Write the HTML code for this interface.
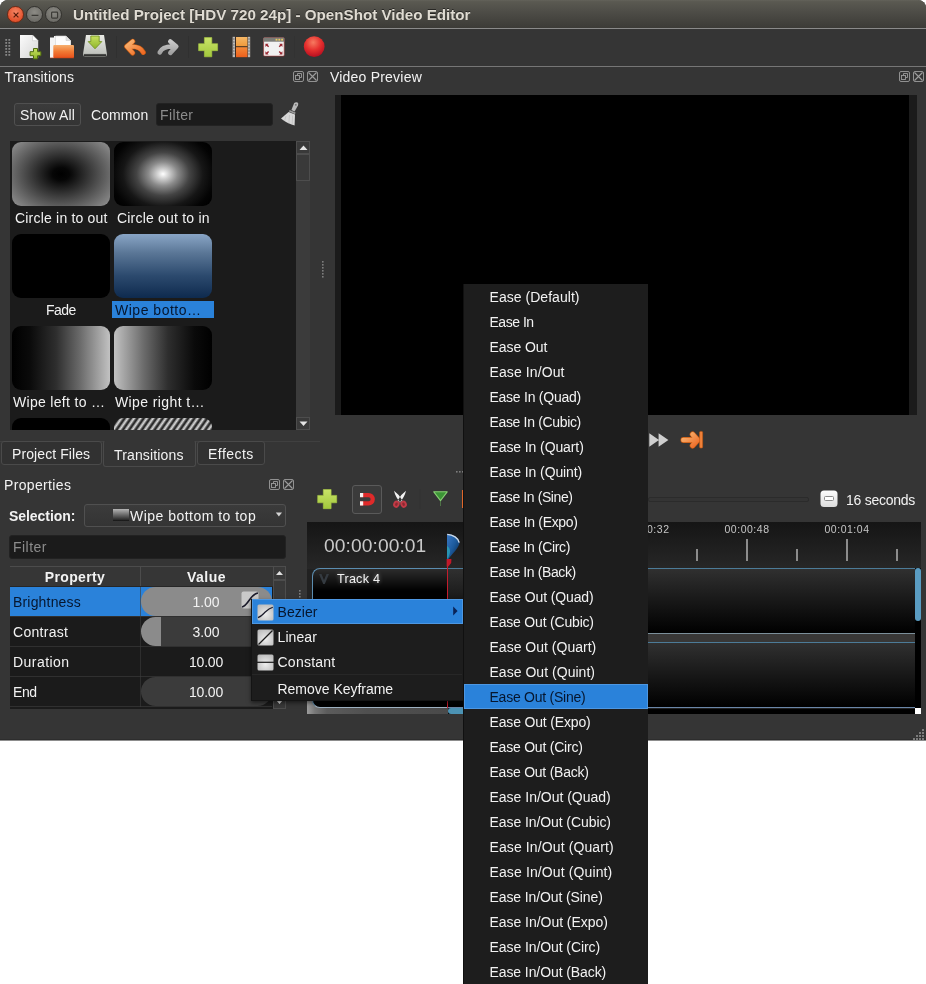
<!DOCTYPE html>
<html lang="en">
<head>
<meta charset="utf-8">
<title>Untitled Project [HDV 720 24p] - OpenShot Video Editor</title>
<style>
*{box-sizing:border-box;margin:0;padding:0}
html,body{width:926px;height:984px;background:#fff;overflow:hidden}
body{will-change:transform}
body{font-family:"Liberation Sans",sans-serif;font-size:14px;color:#f2f2f2;position:relative;line-height:20px}
.a{position:absolute}
.t{position:absolute;white-space:nowrap;line-height:20px;height:20px}
.b{font-weight:700}
#win{left:0;top:0;width:926px;height:741px;border-bottom:1px solid #8d8d8d;box-shadow:inset 0 -1px 0 #2d2d2d;background:#353535;border-radius:8px 8px 0 0;overflow:hidden}
#titlebar{left:0;top:0;width:926px;height:28px;background:linear-gradient(#63625a 0,#5a5951 6%,#504f49 35%,#45443f 70%,#3c3b37 100%)}
#titlebar .ttl{top:5px;font-size:15.2px;font-weight:700;color:#dfdbd2;text-shadow:0 -1px 0 rgba(0,0,0,.5)}
.wb{border-radius:50%;width:16.8px;height:16.8px;top:6.2px}
#toolbar{left:0;top:28px;width:926px;height:39px;border-top:1px solid #8a8a8a;border-bottom:1px solid #767676}
.base{background:#1b1b1b}
.inp{background:#1b1b1b;border-radius:3px;border:1px solid #222}
.ph{color:#8c8c8c}
.btn{border:1px solid #505050;border-radius:3px;background:linear-gradient(#3b3b3b,#343434)}
.thumb{width:98px;height:64px;border-radius:9px}
.sel{background:#2a82da;color:#06162e}
.sb{background:#3b3b3b}
.sbb{background:#393939;border:1px solid #4d4d4d}
.menu{background:#1d1d1d;box-shadow:inset 1px 0 0 #101010}
.mi{position:absolute;left:1px;right:0;height:25px}
.mi.sel{box-shadow:inset 0 0 0 1px #4d97e2}
.rl{top:-1px;font-size:10.5px;color:#c6c6c6;width:100px;text-align:center;line-height:16px;height:16px}
.tk{width:2px;background:#8c8c8c}
.mi span{position:absolute;top:3px;margin-left:-1px;line-height:20px;white-space:nowrap}
</style>
</head>
<body>
<div id="win" class="a">
  <!-- title bar -->
  <div id="titlebar" class="a">
    <div class="a wb" style="left:7.1px;background:radial-gradient(circle at 50% 35%,#f58564,#e3522d 70%,#b8431f);border:1px solid #6e2a15"></div>
    <div class="a wb" style="left:26.1px;background:radial-gradient(circle at 50% 35%,#8c8b85,#6f6e69 70%,#5a5955);border:1px solid #33322f"></div>
    <div class="a wb" style="left:45.1px;background:radial-gradient(circle at 50% 35%,#8c8b85,#6f6e69 70%,#5a5955);border:1px solid #33322f"></div>
    <svg class="a" style="left:7.5px;top:6.6px" width="56" height="16" viewBox="0 0 56 16" fill="none" stroke="#3b3a36" stroke-width="1.2"><path d="M5.6 5.6 L10.4 10.4 M10.4 5.6 L5.6 10.4" stroke="#5a1d0c"/><path d="M23.6 8.3 H30.4"/><rect x="43.6" y="5.1" width="6" height="6" rx=".8"/></svg>
    <div class="t ttl" style="letter-spacing:-0.01px;left:73px">Untitled Project [HDV 720 24p] - OpenShot Video Editor</div>
  </div>
  <div id="toolbar" class="a"></div>
  <svg class="a" style="left:0;top:29px" width="340" height="37" viewBox="0 29 340 37">
    <defs>
      <linearGradient id="gpg" x1="0" y1="0" x2="1" y2="1"><stop offset="0" stop-color="#fbfbfb"/><stop offset="1" stop-color="#d6d6d6"/></linearGradient>
      <linearGradient id="ggp" x1="0" y1="0" x2="0" y2="1"><stop offset="0" stop-color="#c9e368"/><stop offset="1" stop-color="#a2c83c"/></linearGradient>
      <linearGradient id="ggr" x1="0" y1="0" x2="0" y2="1"><stop offset="0" stop-color="#c6e05e"/><stop offset="1" stop-color="#8fb52a"/></linearGradient>
      <linearGradient id="gor" x1="0" y1="0" x2="0" y2="1"><stop offset="0" stop-color="#f6b070"/><stop offset=".5" stop-color="#f27a34"/><stop offset="1" stop-color="#e9501a"/></linearGradient>
      <linearGradient id="gdr" x1="0" y1="0" x2="0" y2="1"><stop offset="0" stop-color="#e9ebe6"/><stop offset=".8" stop-color="#c3c5c0"/><stop offset="1" stop-color="#8b8d88"/></linearGradient>
      <linearGradient id="gun" x1="0" y1="0" x2="1" y2="1"><stop offset="0" stop-color="#f9b774"/><stop offset="1" stop-color="#ef6a24"/></linearGradient>
      <linearGradient id="gre" x1="0" y1="0" x2="0" y2="1"><stop offset="0" stop-color="#c8c8c8"/><stop offset="1" stop-color="#a2a2a2"/></linearGradient>
      <radialGradient id="grec" cx=".45" cy=".3" r=".75"><stop offset="0" stop-color="#f77a60"/><stop offset=".5" stop-color="#e6302e"/><stop offset="1" stop-color="#b00a1e"/></radialGradient>
      <linearGradient id="gf1" x1="0" y1="0" x2="0" y2="1"><stop offset="0" stop-color="#f5b766"/><stop offset="1" stop-color="#ef9a3c"/></linearGradient>
      <linearGradient id="gf2" x1="0" y1="0" x2="0" y2="1"><stop offset="0" stop-color="#f48a38"/><stop offset="1" stop-color="#ec5f1c"/></linearGradient>
    </defs>
    <!-- handle -->
    <g fill="#868686"><rect x="5.3" y="39" width="1.8" height="1.8"/><rect x="8.4" y="39" width="1.8" height="1.8"/><rect x="5.3" y="42" width="1.8" height="1.8"/><rect x="8.4" y="42" width="1.8" height="1.8"/><rect x="5.3" y="45" width="1.8" height="1.8"/><rect x="8.4" y="45" width="1.8" height="1.8"/><rect x="5.3" y="48" width="1.8" height="1.8"/><rect x="8.4" y="48" width="1.8" height="1.8"/><rect x="5.3" y="51" width="1.8" height="1.8"/><rect x="8.4" y="51" width="1.8" height="1.8"/><rect x="5.3" y="54" width="1.8" height="1.8"/><rect x="8.4" y="54" width="1.8" height="1.8"/></g>
    <!-- new -->
    <path d="M20 35 H32.5 L38.2 40.7 V58 H20Z" fill="url(#gpg)"/>
    <path d="M32.5 35 L38.2 40.7 H32.5Z" fill="#fff" stroke="#c0c0c0" stroke-width=".5"/>
    <path d="M33.5 48.5 h4 v3.2 h3.4 v4 h-3.4 v3.2 h-4 v-3.2 h-3.4 v-4 h3.4Z" fill="url(#ggr)" stroke="#4f6b10" stroke-width="1" stroke-linejoin="round"/>
    <!-- open -->
    <path d="M50 37.5 H54 V36 H66 L71 41 V58 H50Z" fill="#f4f4f4"/>
    <path d="M55.5 36 H66 L70.5 40.5 V46 H55.5Z" fill="#fdfdfd" stroke="#d2d2d2" stroke-width=".6"/><path d="M66 36 V40.5 H70.5Z" fill="#e2e2e2" stroke="#c4c4c4" stroke-width=".5"/>
    <rect x="53.3" y="45" width="20.7" height="13" rx="1" fill="url(#gor)"/>
    <rect x="50" y="57.4" width="24" height="1" fill="#c8451a" opacity=".6"/>
    <!-- save -->
    <path d="M86 35 H104 L107 54 Q107 57 104.5 57 H85.5 Q83 57 83 54Z" fill="url(#gdr)"/>
    <rect x="84" y="54.2" width="22" height="2.2" fill="#1e1e1e" opacity=".85"/>
    <path d="M90.8 36 h8.4 v5.6 h2.6 l-6.8 7.2 l-6.8 -7.2 h2.6Z" fill="url(#ggr)" stroke="#6c8c1c" stroke-width=".8" stroke-linejoin="round"/>
    <!-- separators -->
    <rect x="116" y="36" width="1" height="22" fill="#2a2a2a" opacity=".4"/>
    <rect x="188" y="36" width="1" height="22" fill="#2a2a2a" opacity=".4"/>
    <rect x="294" y="36" width="1" height="22" fill="#2a2a2a" opacity=".3"/>
    <!-- undo -->
    <g transform="translate(135 47.2) scale(.92) translate(-135 -46.8)">
    <path d="M132.5 40.5 L126 46 L132.5 53 M126.5 46.3 C134 45.5 141 46 144 52.5" fill="none" stroke="#c45a12" stroke-width="5.6" stroke-linecap="round" stroke-linejoin="round"/>
    <path d="M132.5 40.5 L126 46 L132.5 53 M126.5 46.3 C134 45.5 141 46 144 52.5" fill="none" stroke="url(#gun)" stroke-width="4.2" stroke-linecap="round" stroke-linejoin="round"/>
    </g>
    <!-- redo -->
    <g transform="translate(168 47.2) scale(.92) translate(-168 -46.8)">
    <path d="M170.5 40.5 L177 46 L170.5 53 M176.5 46.3 C169 45.5 162 46 159 52.5" fill="none" stroke="url(#gre)" stroke-width="5" stroke-linecap="round" stroke-linejoin="round"/>
    </g>
    <!-- plus -->
    <path d="M204.4 37.6 h7.4 v6.1 h5.8 v7 h-5.8 v6.1 h-7.4 v-6.1 h-5.8 v-7 h5.8Z" fill="url(#ggp)" stroke="#a9cb42" stroke-width=".6" stroke-linejoin="round"/>
    <!-- film -->
    <rect x="232.6" y="36.8" width="17.6" height="20.4" fill="#3a2a20"/>
    <rect x="232.6" y="36.8" width="2.4" height="20.4" fill="#b9b9b9"/>
    <rect x="247.8" y="36.8" width="2.4" height="20.4" fill="#b9b9b9"/>
    <g fill="#6a6a6a"><rect x="233" y="38.5" width="1.6" height="1"/><rect x="233" y="41.5" width="1.6" height="1"/><rect x="233" y="44.5" width="1.6" height="1"/><rect x="233" y="47.5" width="1.6" height="1"/><rect x="233" y="50.5" width="1.6" height="1"/><rect x="233" y="53.5" width="1.6" height="1"/><rect x="248.2" y="38.5" width="1.6" height="1"/><rect x="248.2" y="41.5" width="1.6" height="1"/><rect x="248.2" y="44.5" width="1.6" height="1"/><rect x="248.2" y="47.5" width="1.6" height="1"/><rect x="248.2" y="50.5" width="1.6" height="1"/><rect x="248.2" y="53.5" width="1.6" height="1"/></g>
    <rect x="236" y="37" width="11.4" height="9.2" fill="url(#gf1)"/>
    <rect x="236" y="47.2" width="11.4" height="10" fill="url(#gf2)"/>
    <!-- fullscreen -->
    <rect x="263.6" y="37.7" width="20.6" height="18.4" rx="1" fill="#f1f1f1" stroke="#a83a3a" stroke-width=".6"/>
    <rect x="263.6" y="37.7" width="20.6" height="4" fill="#7c7d78"/>
    <g fill="#e8c860"><rect x="275.6" y="38.8" width="1.8" height="1.8"/><rect x="278.4" y="38.8" width="1.8" height="1.8"/><rect x="281.2" y="38.8" width="1.8" height="1.8"/></g>
    <g fill="#9a2630"><path d="M265.4 43.8 h3.2 l-1 1 l1.5 1.5 l-1 1 l-1.5 -1.5 l-1.2 1.2Z"/><path d="M282.4 43.8 h-3.2 l1 1 l-1.5 1.5 l1 1 l1.5 -1.5 l1.2 1.2Z"/><path d="M265.4 54.4 h3.2 l-1 -1 l1.5 -1.5 l-1 -1 l-1.5 1.5 l-1.2 -1.2Z"/><path d="M282.4 54.4 h-3.2 l1 -1 l-1.5 -1.5 l1 -1 l1.5 1.5 l1.2 -1.2Z"/></g>
    <!-- record -->
    <circle cx="314.2" cy="46.6" r="10.4" fill="url(#grec)"/>
  </svg>

  <!-- Transitions dock -->
  <div class="t" style="letter-spacing:0.16px;left:4.5px;top:67px">Transitions</div>
  <div class="a btn" style="left:14px;top:103px;width:67px;height:23px"></div>
  <div class="t" style="letter-spacing:0.17px;left:20px;top:105px">Show All</div>
  <div class="t" style="letter-spacing:0.10px;left:91px;top:105px">Common</div>
  <div class="a inp" style="left:156px;top:102.5px;width:117px;height:23.7px"></div>
  <div class="t ph" style="letter-spacing:0.38px;left:160px;top:105px">Filter</div>

  <div class="a base" style="left:10px;top:141px;width:300px;height:289px;overflow:hidden" id="list"><div class="a" style="left:0;top:-1px;width:300px;height:290px">
    <div class="a thumb" style="left:2px;top:2px;background:radial-gradient(ellipse 62% 70% at 50% 50%,#000 0,#060606 14%,#4c4c4c 60%,#888 100%,#adadad 112%)"></div>
    <div class="a thumb" style="left:104px;top:2px;background:radial-gradient(ellipse 60% 75% at 50% 50%,#fff 0,#d0d0d0 10%,#8a8a8a 25%,#444 45%,#161616 68%,#040404 88%,#000 100%)"></div>
    <div class="t" style="letter-spacing:0.20px;left:5px;top:68px">Circle in to out</div>
    <div class="t" style="letter-spacing:0.20px;left:107px;top:68px">Circle out to in</div>

    <div class="a thumb" style="left:2px;top:94px;background:#000"></div>
    <div class="a thumb" style="left:104px;top:94px;background:linear-gradient(#89a5c6 0,#5a7696 30%,#2c4a6e 65%,#0e2a4e 100%)"></div>
    <div class="t" style="letter-spacing:-0.51px;left:36px;top:160px">Fade</div>
    <div class="a sel" style="left:102px;top:161px;width:102px;height:17px"></div>
    <div class="t" style="letter-spacing:0.51px;left:105px;top:160px;color:#06162e">Wipe botto…</div>

    <div class="a thumb" style="left:2px;top:186px;background:linear-gradient(90deg,#000 0,#0a0a0a 18%,#2e2e2e 45%,#6c6c6c 70%,#c2c2c2 100%)"></div>
    <div class="a thumb" style="left:104px;top:186px;background:linear-gradient(90deg,#c2c2c2 0,#6c6c6c 30%,#2e2e2e 55%,#0a0a0a 82%,#000 100%)"></div>
    <div class="t" style="letter-spacing:0.31px;left:3px;top:252px">Wipe left to …</div>
    <div class="t" style="letter-spacing:0.39px;left:105px;top:252px">Wipe right t…</div>

    <div class="a thumb" style="left:2px;top:278px;background:#000"></div>
    <div class="a thumb" style="left:104px;top:278px;background:repeating-linear-gradient(125deg,#9a9a9a 0,#d8d8d8 1.2px,#5a5a5a 2.6px,#2a2a2a 3.4px,#2a2a2a 4.2px,#9a9a9a 5.2px)"></div>

    <div class="a sb" style="left:286px;top:0;width:14px;height:290px"></div>
    <div class="a sbb" style="left:286px;top:1px;width:14px;height:13px"></div>
    <div class="a sbb" style="left:286px;top:14px;width:14px;height:27px"></div>
    <div class="a sbb" style="left:286px;top:277px;width:14px;height:13px"></div>
  </div></div>

  <!-- tabs -->
  <div class="a" style="left:0;top:441px;width:320px;height:1px;background:#404040"></div>
  <div class="a btn" style="left:1px;top:441px;width:101px;height:24px;background:#313131;border-color:#4a4a4a"></div>
  <div class="a btn" style="left:103px;top:440px;width:93px;height:27px;background:#353535;border-color:#4a4a4a;border-top-color:#353535"></div>
  <div class="a btn" style="left:197px;top:441px;width:68px;height:24px;background:#313131;border-color:#4a4a4a"></div>
  <div class="t" style="letter-spacing:0.09px;left:12px;top:444px">Project Files</div>
  <div class="t" style="letter-spacing:0.15px;left:114px;top:445px">Transitions</div>
  <div class="t" style="letter-spacing:0.46px;left:208px;top:444px">Effects</div>

  <!-- Properties dock -->
  <div class="t" style="letter-spacing:0.35px;left:4px;top:475px">Properties</div>
  <div class="t b" style="letter-spacing:-0.05px;left:9px;top:506px">Selection:</div>
  <div class="a btn" style="left:84px;top:504px;width:202px;height:23px"></div>
  <div class="a" style="left:113px;top:509px;width:16px;height:12px;background:linear-gradient(#b5b5b5,#777 40%,#2a2a2a 90%,#111)"></div>
  <div class="t" style="letter-spacing:0.48px;left:130px;top:506px">Wipe bottom to top</div>
  <div class="a inp" style="left:9px;top:535px;width:277px;height:24px"></div>
  <div class="t ph" style="letter-spacing:0.47px;left:13px;top:537px">Filter</div>

  <div class="a base" style="left:10px;top:566px;width:276px;height:142.5px;overflow:hidden" id="tbl">
    <div class="a" style="left:0;top:0;width:263px;height:21px;background:#363636;border-top:1px solid #4c4c4c;border-bottom:1px solid #262626"></div>
    <div class="a" style="left:130px;top:1px;width:1px;height:19px;background:#4c4c4c"></div>
    <div class="t b" style="letter-spacing:0.37px;left:0;top:1px;width:130px;text-align:center">Property</div>
    <div class="t b" style="letter-spacing:0.45px;left:131px;top:1px;width:131px;text-align:center">Value</div>
    <!-- rows -->
    <div class="a sel" style="left:0;top:21px;width:262px;height:29px"></div>
    <div class="a" style="left:131px;top:21px;width:131px;height:29px;border-radius:15px;background:#8b8b8b"></div>
    <div class="a" style="left:131px;top:51px;width:131px;height:29px;border-radius:15px;background:linear-gradient(90deg,#8b8b8b 20px,#3b3b3b 20px)"></div>
    <div class="a" style="left:131px;top:111px;width:131px;height:29px;border-radius:15px;background:#3b3b3b"></div>
    <div class="a" style="left:0;top:50px;width:262px;height:1px;background:#303030"></div>
    <div class="a" style="left:0;top:80px;width:262px;height:1px;background:#303030"></div>
    <div class="a" style="left:0;top:110px;width:262px;height:1px;background:#303030"></div>
    <div class="a" style="left:0;top:140px;width:262px;height:1px;background:#303030"></div>
    <div class="a" style="left:130px;top:21px;width:1px;height:120px;background:rgba(60,60,60,.6)"></div>
    <div class="t" style="letter-spacing:0.18px;left:3px;top:26px;color:#06162e">Brightness</div>
    <div class="t" style="letter-spacing:0.28px;left:3px;top:56px">Contrast</div>
    <div class="t" style="letter-spacing:0.45px;left:3px;top:86px">Duration</div>
    <div class="t" style="letter-spacing:-0.41px;left:3px;top:116px">End</div>
    <div class="t" style="letter-spacing:-0.02px;left:131px;top:26px;width:130px;text-align:center">1.00</div>
    <div class="t" style="letter-spacing:-0.02px;left:131px;top:56px;width:130px;text-align:center">3.00</div>
    <div class="t" style="letter-spacing:-0.19px;left:131px;top:86px;width:130px;text-align:center">10.00</div>
    <div class="t" style="letter-spacing:-0.19px;left:131px;top:116px;width:130px;text-align:center">10.00</div>
    <svg class="a" style="left:231px;top:25px" width="18" height="18" viewBox="0 0 18 18"><rect x="0.5" y="0.5" width="17" height="17" rx="2" fill="#c9c9c9"/><path d="M1 16 C8 14 9 3 17 2" stroke="#1b1b2b" stroke-width="1.6" fill="none"/></svg>
    <!-- scrollbar -->
    <div class="a sb" style="left:263px;top:0;width:13px;height:143px"></div>
    <div class="a sbb" style="left:263px;top:0;width:13px;height:14px"></div>
    <div class="a sbb" style="left:263px;top:14px;width:13px;height:60px"></div>
    <div class="a sbb" style="left:263px;top:129px;width:13px;height:13.5px"></div>
    <svg class="a" style="left:263px;top:0" width="13" height="14"><path d="M3 9 L6.5 5 L10 9Z" fill="#e0e0e0"/></svg>
    <svg class="a" style="left:263px;top:129px" width="13" height="14"><path d="M3 5 L6.5 9 L10 5Z" fill="#e0e0e0"/></svg>
  </div>

  <!-- Video preview dock -->
  <div class="t" style="letter-spacing:0.21px;left:330px;top:67px">Video Preview</div>
  <div class="a" style="left:335px;top:95px;width:582px;height:320px;background:#1b1b1b"></div>
  <div class="a" style="left:341px;top:95px;width:568px;height:320px;background:#000"></div>

  <svg class="a" style="left:293px;top:71px" width="26" height="12" viewBox="0 0 26 12" fill="none" stroke="#9c9c9c" stroke-width=".9">
    <rect x="0.5" y="0.5" width="10" height="10" rx="1.5"/><rect x="2.5" y="4.5" width="4" height="4" stroke-width=".9"/><path d="M4.5 4.5 V2.5 H8.5 V6.5 H6.5" stroke-width=".9"/>
    <g transform="translate(14,0)"><rect x="0.5" y="0.5" width="10" height="10" rx="1.5"/><path d="M1.5 1.5 L9.5 9.5 M9.5 1.5 L1.5 9.5" stroke-width="1.1"/></g></svg>
  <svg class="a" style="left:899px;top:71px" width="26" height="12" viewBox="0 0 26 12" fill="none" stroke="#9c9c9c" stroke-width=".9">
    <rect x="0.5" y="0.5" width="10" height="10" rx="1.5"/><rect x="2.5" y="4.5" width="4" height="4" stroke-width=".9"/><path d="M4.5 4.5 V2.5 H8.5 V6.5 H6.5" stroke-width=".9"/>
    <g transform="translate(14,0)"><rect x="0.5" y="0.5" width="10" height="10" rx="1.5"/><path d="M1.5 1.5 L9.5 9.5 M9.5 1.5 L1.5 9.5" stroke-width="1.1"/></g></svg>
  <svg class="a" style="left:269px;top:479px" width="26" height="12" viewBox="0 0 26 12" fill="none" stroke="#9c9c9c" stroke-width=".9">
    <rect x="0.5" y="0.5" width="10" height="10" rx="1.5"/><rect x="2.5" y="4.5" width="4" height="4" stroke-width=".9"/><path d="M4.5 4.5 V2.5 H8.5 V6.5 H6.5" stroke-width=".9"/>
    <g transform="translate(14,0)"><rect x="0.5" y="0.5" width="10" height="10" rx="1.5"/><path d="M1.5 1.5 L9.5 9.5 M9.5 1.5 L1.5 9.5" stroke-width="1.1"/></g></svg>
  <svg class="a" style="left:280px;top:101px" width="20" height="26" viewBox="280 101 20 26">
    <path d="M294.2 103 Q296 101.6 297.6 102.6 Q298.8 103.6 298 105.4 L294.6 111.6 L291.4 110Z" fill="#b9b9b9"/>
    <circle cx="295.8" cy="104.8" r=".9" fill="#6e6e6e"/>
    <path d="M289.6 110 L295.6 112.6 L295 114.2 L289 111.6Z" fill="#9a9a9a"/>
    <path d="M288.6 112 L295 114.6 L294.6 125.4 Q287 123.6 281 118.6Z" fill="#d8d8d8"/>
    <path d="M286 116 L284.5 121 M289.5 115 L288.8 123.4 M292.6 115.6 L292.2 124.6" stroke="#bdbdbd" stroke-width=".7" fill="none"/>
  </svg>
  <svg class="a" style="left:297px;top:141px" width="13" height="13"><path d="M2.5 9 L6.5 4.5 L10.5 9Z" fill="#e4e4e4"/></svg>
  <svg class="a" style="left:297px;top:417px" width="13" height="13"><path d="M2.5 4.5 L6.5 9 L10.5 4.5Z" fill="#e4e4e4"/></svg>
  <svg class="a" style="left:275px;top:512px" width="8" height="6"><path d="M0.8 0.6 L7 0.6 L3.9 4.4Z" fill="#d4d4d4"/></svg>
  <svg class="a" style="left:645px;top:428px" width="62" height="24" viewBox="645 428 62 24">
    <defs><linearGradient id="gje" x1="0" y1="0" x2="1" y2="1"><stop offset="0" stop-color="#f9b774"/><stop offset="1" stop-color="#ee6a26"/></linearGradient></defs>
    <path d="M649.3 433.2 L659 440 L649.3 446.8Z M658.6 433.2 L668.4 440 L658.6 446.8Z" fill="#cfcfcf"/>
    <path d="M683.4 440 H696 M692.6 434.4 L697.6 440 L692.6 445.6" fill="none" stroke="#c9590f" stroke-width="5.8" stroke-linecap="round" stroke-linejoin="round"/>
    <path d="M683.4 440 H696 M692.6 434.4 L697.6 440 L692.6 445.6" fill="none" stroke="url(#gje)" stroke-width="4.6" stroke-linecap="round" stroke-linejoin="round"/>
    <rect x="699.6" y="431.4" width="3" height="16.6" rx="1" fill="#f0813a" stroke="#c9590f" stroke-width=".6"/>
  </svg>
  <div class="a" style="left:352px;top:485px;width:30px;height:29px;border:1px solid #5a5a5a;border-radius:3px;background:#3b3b3b"></div>
  <svg class="a" style="left:312px;top:484px" width="152" height="32" viewBox="312 484 152 32">
    <path d="M323.3 489.5 h7.8 v5.9 h5.6 v7.4 h-5.6 v5.9 h-7.8 v-5.9 h-5.6 v-7.4 h5.6Z" fill="url(#ggp)" stroke="#a9cb42" stroke-width=".6" stroke-linejoin="round"/>
    <path d="M360 495.1 H368.6 A4.1 4.1 0 0 1 368.6 503.4 H360" fill="none" stroke="#e02a2a" stroke-width="4.2"/>
    <rect x="360" y="493" width="3.2" height="4.2" fill="#f6f0f0"/><rect x="360" y="501.3" width="3.2" height="4.2" fill="#f6f0f0"/>
    <path d="M394 490.8 Q395.4 497 400.2 502.4 L402.4 500.4 Q398.6 494 394 490.8Z M406 490.8 Q404.6 497 399.8 502.4 L397.6 500.4 Q401.4 494 406 490.8Z" fill="#f3f3f3"/>
    <ellipse cx="396.4" cy="504.2" rx="2.2" ry="2.7" fill="#8a2a32" stroke="#c23a46" stroke-width="1.9" transform="rotate(25 396.4 504.2)"/>
    <ellipse cx="403.6" cy="504.2" rx="2.2" ry="2.7" fill="#8a2a32" stroke="#c23a46" stroke-width="1.9" transform="rotate(-25 403.6 504.2)"/>
    <rect x="419.5" y="489" width="1" height="20" fill="#2e2e2e" opacity=".6"/>
    <path d="M433.8 491.8 H447.2 L440.5 500.6Z" fill="#3c9436" stroke="#86cf72" stroke-width="1.1" stroke-linejoin="round"/>
    <rect x="440" y="501" width="1" height="5" fill="#6ab05a" opacity=".5"/>
    <rect x="462" y="490" width="1.2" height="18" fill="#e0672a"/>
  </svg>
  <svg class="a" style="left:820px;top:490px" width="18" height="18" viewBox="0 0 18 18"><defs><linearGradient id="gzb" x1="0" y1="0" x2="0" y2="1"><stop offset="0" stop-color="#fdfdfd"/><stop offset="1" stop-color="#dcdcdc"/></linearGradient></defs><rect x=".5" y=".5" width="17" height="16.5" rx="3.5" fill="url(#gzb)"/><rect x="4.5" y="6.5" width="9" height="4" rx="1" fill="#fff" stroke="#8a8a8a" stroke-width="1"/></svg>
  <svg class="a" style="left:321px;top:258px" width="4" height="24"><g fill="#7d7d7d"><rect x="1" y="3" width="1.6" height="1.6"/><rect x="1" y="6" width="1.6" height="1.6"/><rect x="1" y="9" width="1.6" height="1.6"/><rect x="1" y="12" width="1.6" height="1.6"/><rect x="1" y="15" width="1.6" height="1.6"/><rect x="1" y="18" width="1.6" height="1.6"/></g></svg>
  <svg class="a" style="left:298px;top:588px" width="4" height="16"><g fill="#7d7d7d"><rect x="1" y="2" width="1.6" height="1.6"/><rect x="1" y="5" width="1.6" height="1.6"/><rect x="1" y="8" width="1.6" height="1.6"/><rect x="1" y="11" width="1.6" height="1.6"/></g></svg>
  <svg class="a" style="left:455px;top:470px" width="10" height="4"><g fill="#7d7d7d"><rect x="1" y="1" width="1.6" height="1.6"/><rect x="4" y="1" width="1.6" height="1.6"/><rect x="7" y="1" width="1.6" height="1.6"/></g></svg>
  <svg class="a" style="left:912px;top:727px" width="14" height="14"><g fill="#7b7b7b"><rect x="10" y="2" width="2" height="2"/><rect x="7" y="5" width="2" height="2"/><rect x="10" y="5" width="2" height="2"/><rect x="4" y="8" width="2" height="2"/><rect x="7" y="8" width="2" height="2"/><rect x="10" y="8" width="2" height="2"/><rect x="1" y="11" width="2" height="2"/><rect x="4" y="11" width="2" height="2"/><rect x="7" y="11" width="2" height="2"/><rect x="10" y="11" width="2" height="2"/></g></svg>
  <!-- timeline -->
  <div class="a" style="left:648px;top:497px;width:161px;height:5px;border:1px solid #2b2b2b;border-radius:2px;background:#343434"></div>
  <div class="t" style="letter-spacing:-0.25px;left:846px;top:490px">16 seconds</div>
  <div class="a" id="tl" style="left:307px;top:522px;width:614px;height:192px;background:#212121;overflow:hidden">
    <div class="a" style="left:0;top:0;width:614px;height:47px;background:linear-gradient(#151515,#272727)"></div>
    <div class="t" style="letter-spacing:0.09px;left:17px;top:13px;font-size:19.2px;color:#c9c9c9;line-height:22px;height:22px">00:00:00:01</div>
    <div class="t rl" style="letter-spacing:0.52px;left:290px;">00:00:32</div>
    <div class="t rl" style="letter-spacing:0.52px;left:390px;">00:00:48</div>
    <div class="t rl" style="letter-spacing:0.52px;left:490px;">00:01:04</div>
    <div class="a tk" style="left:389px;top:27px;height:12px"></div>
    <div class="a tk" style="left:439px;top:17px;height:22px"></div>
    <div class="a tk" style="left:489px;top:27px;height:12px"></div>
    <div class="a tk" style="left:539px;top:17px;height:22px"></div>
    <div class="a tk" style="left:589px;top:27px;height:12px"></div>
    <!-- lanes -->
    <div class="a" style="left:141px;top:46px;width:467px;height:66px;background:linear-gradient(#303030 0,#1a1a1a 45%,#000 100%);border-top:1px solid #4c7b98;border-bottom:1px solid #7b8f9a"></div>
    <div class="a" style="left:141px;top:112px;width:467px;height:8px;background:#383736"></div>
    <div class="a" style="left:141px;top:120px;width:467px;height:66px;background:linear-gradient(#303030 0,#1a1a1a 45%,#000 100%);border-top:1px solid #4c7b98;border-bottom:1px solid #6a86a8"></div>
    <div class="a" style="left:0;top:178px;width:141px;height:14px;background:linear-gradient(90deg,#9c9c9c 0,#777 8px,#5c5c5c 20px,#505050 60px,#4a4a4a)"></div>
    <!-- track name boxes -->
    <div class="a" style="left:5px;top:46px;width:136px;height:68px;background:linear-gradient(#2c2c2c 0,#000 22px);border:1px solid #5b8db0;border-right:0;border-radius:8px 0 0 8px"></div>
    <div class="a" style="left:5px;top:120px;width:136px;height:66px;background:linear-gradient(#2c2c2c 0,#000 22px);border:1px solid #5b8db0;border-bottom-color:#9fb2c2;border-right:0;border-radius:8px 0 0 8px"></div>
    
    
    <div class="a" style="left:141px;top:187px;width:473px;height:5px;background:#000"></div>
    <div class="a" style="left:141px;top:186px;width:40px;height:6px;background:#4c93b4;border-radius:3px"></div>
    <svg class="a" style="left:12px;top:52px" width="10" height="10" viewBox="0 0 10 10"><path d="M0 0 L2.5 0 L5 6 L7.5 0 L10 0 L5.8 10 L4.2 10Z" fill="#343a40"/></svg>
    <div class="t" style="letter-spacing:0.23px;left:30px;top:47px;font-size:12.6px;text-shadow:0 0 4px rgba(255,255,255,.45)">Track 4</div>
    <!-- playhead -->
    <svg class="a" style="left:138px;top:10px" width="18" height="40" viewBox="0 0 18 40"><defs><linearGradient id="ph1" x1="0" y1="0" x2="1" y2="1"><stop offset="0" stop-color="#3a78c4"/><stop offset=".5" stop-color="#1c5a9c"/><stop offset="1" stop-color="#0a2444"/></linearGradient></defs><path d="M2 2 C8 2 14 5.5 14.6 11 C13 17 7.5 21.5 3.4 27 L2 27Z" fill="url(#ph1)"/><path d="M2.2 2.4 C8 2.6 13.4 6 14.2 10.6" fill="none" stroke="#dfe8f2" stroke-width="1.4" opacity=".9"/><path d="M2 14 C5 16 6.5 19 3 26.4 L2 26.4Z" fill="#2aa6b8" opacity=".75"/><path d="M1.6 27 L6.4 27 L6.2 31 L3.4 34.6 L1.6 34.6Z" fill="#c2182a"/></svg>
    <div class="a" style="left:139.6px;top:38px;width:1.7px;height:148px;background:#c41c2c"></div>
    <!-- scrollbar -->
    <div class="a" style="left:608px;top:46px;width:6px;height:146px;background:#000"></div>
    <div class="a" style="left:608px;top:46px;width:6px;height:53px;background:#5a9cc2;border-radius:3px"></div>
    <div class="a" style="left:608px;top:186px;width:6px;height:6px;background:#fff"></div>
  </div>
</div>

<!-- context menus -->
<div class="a menu" id="m1" style="left:251px;top:599px;width:212px;height:102px;box-shadow:0 2px 4px rgba(0,0,0,.5),inset 1px 0 0 #141414,inset 0 -1px 0 #141414">
  <div class="mi sel" style="top:0;height:25px"><span style="letter-spacing:0.04px;left:26.5px;color:#06162e">Bezier</span></div>
  <div class="mi" style="top:25px"><span style="letter-spacing:0.10px;left:26.5px">Linear</span></div>
  <div class="mi" style="top:50px"><span style="letter-spacing:0.24px;left:26.5px">Constant</span></div>
  <div class="a" style="left:1px;top:75px;width:210px;height:1px;background:#272727"></div>
  <div class="mi" style="top:77px"><span style="letter-spacing:-0.02px;left:26.5px">Remove Keyframe</span></div>
  <svg class="a" style="left:6px;top:4.6px" width="17" height="70" viewBox="0 0 17 70">
    <defs><radialGradient id="gmi" cx=".5" cy=".6" r=".7"><stop offset="0" stop-color="#eeeeee"/><stop offset="1" stop-color="#b9b9b9"/></radialGradient></defs>
    <rect x=".5" y=".5" width="16" height="16" rx="1.5" fill="url(#gmi)"/><path d="M1 13.6 C5 12.2 6.5 9.6 8.2 8 S12 4.4 15.8 3.2" stroke="#1a1a2a" stroke-width="1.2" fill="none"/>
    <rect x=".5" y="25.5" width="16" height="16" rx="1.5" fill="url(#gmi)"/><path d="M1.5 40.5 L15.5 26.5" stroke="#1a1a1a" stroke-width="1.2" fill="none"/>
    <rect x=".5" y="50.5" width="16" height="16" rx="1.5" fill="url(#gmi)"/><path d="M0 58.3 H17" stroke="#1a1a1a" stroke-width="1.2" fill="none"/>
  </svg>
  <svg class="a" style="left:202px;top:6.5px" width="6" height="10"><path d="M.2 .4 L4.6 5 L.2 9.6Z" fill="#0a2458"/></svg>
</div>
<div class="a menu" id="m2" style="left:463px;top:284px;width:185px;height:700px">
  <div class="mi" style="top:0px"><span style="letter-spacing:0.04px;left:26.5px">Ease (Default)</span></div>
  <div class="mi" style="top:25px"><span style="letter-spacing:-0.48px;left:26.5px">Ease In</span></div>
  <div class="mi" style="top:50px"><span style="letter-spacing:-0.08px;left:26.5px">Ease Out</span></div>
  <div class="mi" style="top:75px"><span style="letter-spacing:0.10px;left:26.5px">Ease In/Out</span></div>
  <div class="mi" style="top:100px"><span style="letter-spacing:-0.25px;left:26.5px">Ease In (Quad)</span></div>
  <div class="mi" style="top:125px"><span style="letter-spacing:-0.34px;left:26.5px">Ease In (Cubic)</span></div>
  <div class="mi" style="top:150px"><span style="letter-spacing:-0.10px;left:26.5px">Ease In (Quart)</span></div>
  <div class="mi" style="top:175px"><span style="letter-spacing:-0.10px;left:26.5px">Ease In (Quint)</span></div>
  <div class="mi" style="top:200px"><span style="letter-spacing:-0.40px;left:26.5px">Ease In (Sine)</span></div>
  <div class="mi" style="top:225px"><span style="letter-spacing:-0.32px;left:26.5px">Ease In (Expo)</span></div>
  <div class="mi" style="top:250px"><span style="letter-spacing:-0.36px;left:26.5px">Ease In (Circ)</span></div>
  <div class="mi" style="top:275px"><span style="letter-spacing:-0.39px;left:26.5px">Ease In (Back)</span></div>
  <div class="mi" style="top:300px"><span style="letter-spacing:-0.12px;left:26.5px">Ease Out (Quad)</span></div>
  <div class="mi" style="top:325px"><span style="letter-spacing:-0.19px;left:26.5px">Ease Out (Cubic)</span></div>
  <div class="mi" style="top:350px"><span style="letter-spacing:0.01px;left:26.5px">Ease Out (Quart)</span></div>
  <div class="mi" style="top:375px"><span style="letter-spacing:0.03px;left:26.5px">Ease Out (Quint)</span></div>
  <div class="mi sel" style="top:400px"><span style="letter-spacing:-0.24px;left:26.5px;color:#06162e">Ease Out (Sine)</span></div>
  <div class="mi" style="top:425px"><span style="letter-spacing:-0.16px;left:26.5px">Ease Out (Expo)</span></div>
  <div class="mi" style="top:450px"><span style="letter-spacing:-0.22px;left:26.5px">Ease Out (Circ)</span></div>
  <div class="mi" style="top:475px"><span style="letter-spacing:-0.23px;left:26.5px">Ease Out (Back)</span></div>
  <div class="mi" style="top:500px"><span style="letter-spacing:-0.01px;left:26.5px">Ease In/Out (Quad)</span></div>
  <div class="mi" style="top:525px"><span style="letter-spacing:-0.08px;left:26.5px">Ease In/Out (Cubic)</span></div>
  <div class="mi" style="top:550px"><span style="letter-spacing:0.11px;left:26.5px">Ease In/Out (Quart)</span></div>
  <div class="mi" style="top:575px"><span style="letter-spacing:0.12px;left:26.5px">Ease In/Out (Quint)</span></div>
  <div class="mi" style="top:600px"><span style="letter-spacing:-0.11px;left:26.5px">Ease In/Out (Sine)</span></div>
  <div class="mi" style="top:625px"><span style="letter-spacing:-0.04px;left:26.5px">Ease In/Out (Expo)</span></div>
  <div class="mi" style="top:650px"><span style="letter-spacing:-0.08px;left:26.5px">Ease In/Out (Circ)</span></div>
  <div class="mi" style="top:675px"><span style="letter-spacing:-0.09px;left:26.5px">Ease In/Out (Back)</span></div>
</div>
</body>
</html>
